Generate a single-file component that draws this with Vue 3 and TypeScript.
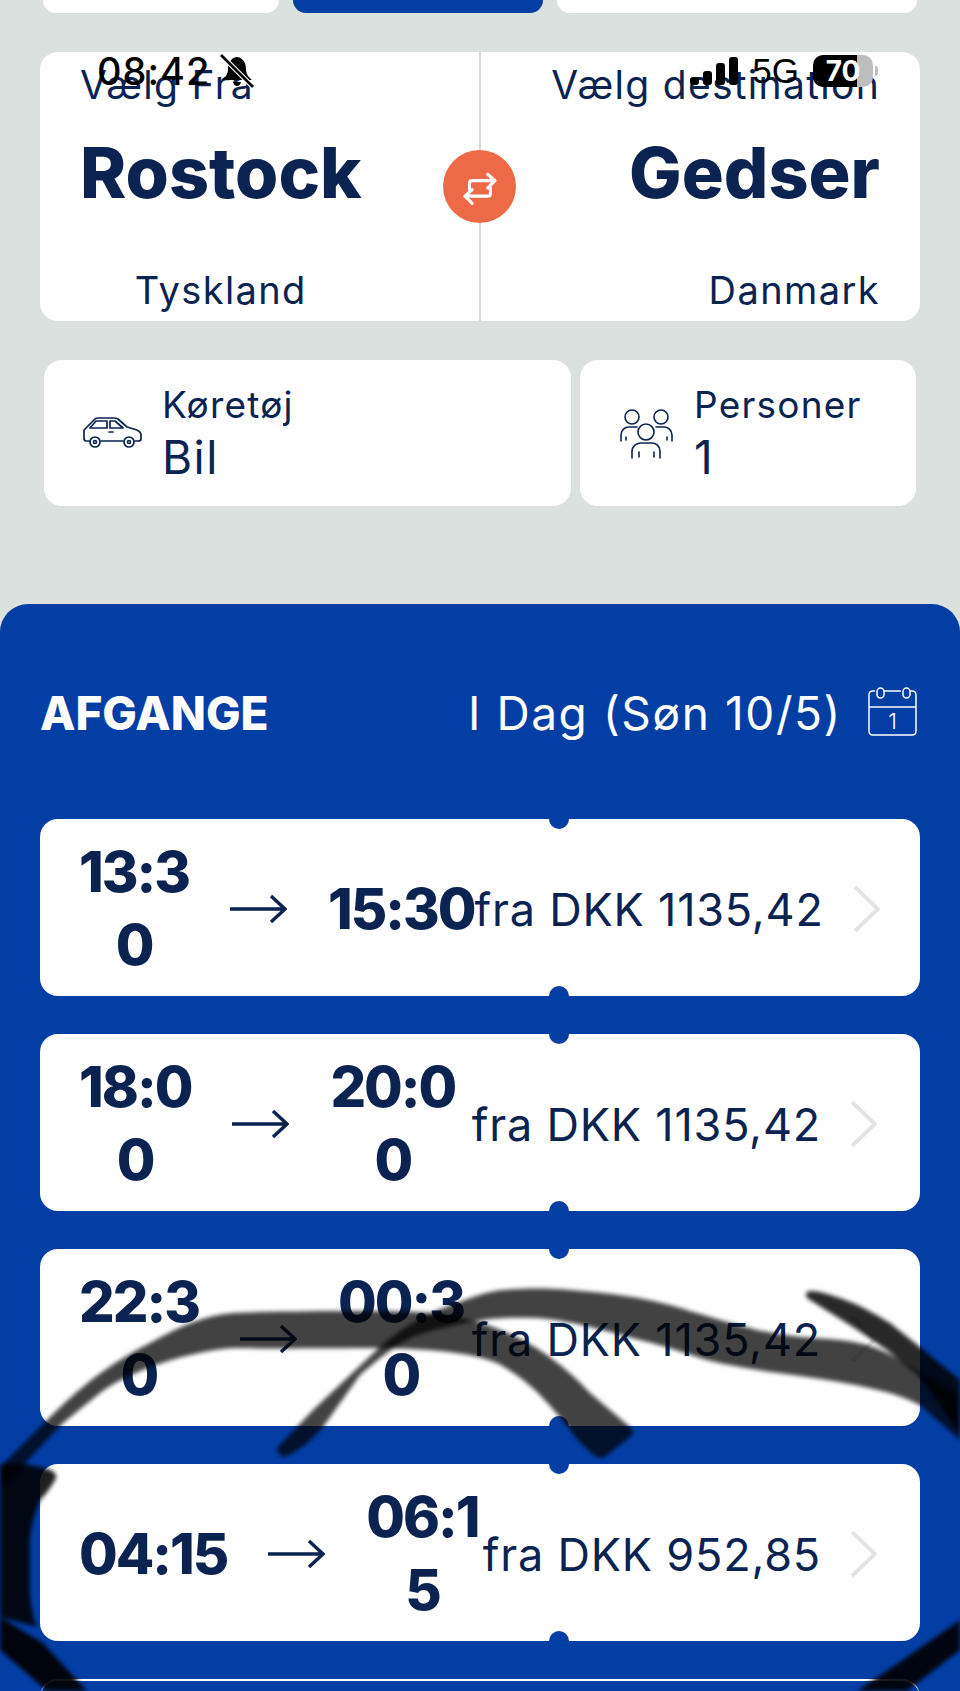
<template>
  <div class="page">
    <div class="tabs">
      <div class="tab tab-a"></div>
      <div class="tab tab-b"></div>
      <div class="tab tab-c"></div>
    </div>

    <div class="route">
      <div class="side side-from">
        <div class="label">Vælg Fra</div>
        <div class="place">
          <div class="name">Rostock</div>
          <div class="country">Tyskland</div>
        </div>
      </div>
      <div class="side side-to">
        <div class="label">Vælg destination</div>
        <div class="place">
          <div class="name">Gedser</div>
          <div class="country">Danmark</div>
        </div>
      </div>
      <div class="swap">
        <svg width="80" height="80" viewBox="0 0 80 80" fill="none" stroke="#fff" stroke-width="3.4" stroke-linecap="round" stroke-linejoin="round">
          <path d="M29 43V36Q29 33 32 33H56M49 26L57 33L49 41" />
          <path d="M52 41V47Q52 50 49 50H24M32 43L24 50L32 58" />
        </svg>
      </div>
    </div>

    <div class="extras">
      <div class="extra extra-car">
        <svg class="car" width="90" height="60" viewBox="0 0 90 60" fill="none" stroke="#0a2351" stroke-width="1.7" stroke-linejoin="round" stroke-linecap="round">
          <path d="M19 41H16Q14 41 14 38V30L25 19Q26 18 28 18H44Q46 18 48 19L57 27L67 30Q71 32 71 35V39Q71 41 68 41H65M53 41H31" />
          <path d="M20 28L26 21H37V28ZM40 21H45L53 28H40Z" />
          <path d="M39 32H43" />
          <circle cx="25" cy="42" r="5" />
          <circle cx="59" cy="42" r="5" />
          <circle cx="25" cy="42" r="1.5" />
          <circle cx="59" cy="42" r="1.5" />
        </svg>
        <div>
          <div class="extra-label">Køretøj</div>
          <div class="extra-value">Bil</div>
        </div>
      </div>
      <div class="extra extra-people">
        <svg class="people" width="85" height="65" viewBox="0 0 85 65" fill="none" stroke="#0a2351" stroke-width="1.6" stroke-linecap="round">
          <circle cx="27" cy="16" r="7" />
          <circle cx="56" cy="16" r="7" />
          <circle cx="41" cy="31" r="8" />
          <path d="M27 57V50C27 45 32 42 36 42H47C51 42 55 45 55 50V57M34 51V56M49 51V56" />
          <path d="M16 40V34C16 29 20 26 24 26H32M67 40V34C67 29 63 26 59 26H51M21 36V39M62 36V39" />
        </svg>
        <div>
          <div class="extra-label">Personer</div>
          <div class="extra-value">1</div>
        </div>
      </div>
    </div>

    <div class="panel">
      <div class="panel-head">
        <div class="panel-title">AFGANGE</div>
        <div class="panel-date">I Dag (Søn 10/5)</div>
        <svg class="calendar" width="49" height="50" viewBox="0 0 49 50" fill="none" stroke="#fff" stroke-width="1.5">
          <path d="M7 4H5Q1 4 1 8V44Q1 48 5 48H44Q48 48 48 44V8Q48 4 44 4H42M16 4H33M1 20H48" />
          <rect x="9" y="1" width="7" height="10" rx="3.5" />
          <rect x="35" y="1" width="7" height="10" rx="3.5" />
          <text x="24.5" y="42" text-anchor="middle" class="cal-day">1</text>
        </svg>
      </div>

      <div class="list">
        <div v-for="dep in departures" :key="dep.price + dep.from[0]" class="dep">
          <div class="time">
            <div v-for="line in dep.from" :key="line">{{ line }}</div>
          </div>
          <svg class="arrow" width="57" height="30" viewBox="0 0 57 30" fill="none" stroke="#0a2351" stroke-width="3.4">
            <path d="M0 15H55M41 2L55 15L41 28" />
          </svg>
          <div class="time">
            <div v-for="line in dep.to" :key="line">{{ line }}</div>
          </div>
          <div class="price">fra DKK {{ dep.price }}</div>
          <svg class="chev" width="27" height="46" viewBox="0 0 27 46" fill="none" stroke="#e3e3e3" stroke-width="4">
            <path d="M2 1L25 23L2 45" />
          </svg>
        </div>
        <div class="dep-next"></div>
      </div>
    </div>

    <!-- status bar laid over the app -->
    <div class="status">
      <div class="clock">08:42</div>
      <svg class="bell" width="34" height="34" viewBox="0 0 34 34">
        <path d="M17 3C10 4 8 10 8 15C8 21 5 23 2 26H32C29 23 26 21 26 15C26 10 24 4 17 3ZM13 28H21Q20 32 17 32Q14 32 13 28Z" fill="#000" />
        <path d="M1 1L33 33" stroke="#fff" stroke-width="5" />
        <path d="M1 1L33 33" stroke="#000" stroke-width="2.6" />
      </svg>
      <div class="status-gap"></div>
      <div class="bars">
        <i class="b1"></i><i class="b2"></i><i class="b3"></i><i class="b4"></i>
      </div>
      <div class="net">5G</div>
      <div class="battery"><span>70</span></div>
      <div class="nub"></div>
    </div>

    <!-- marker scribble drawn over the screenshot -->
    <svg class="scribble" width="960" height="1691" viewBox="0 0 960 1691">
      <defs>
        <filter id="soft" x="-5%" y="-5%" width="110%" height="110%">
          <feGaussianBlur stdDeviation="2.2" />
        </filter>
      </defs>
      <g filter="url(#soft)">
        <path fill-opacity="0.74" d="M0 1467L50 1417C80 1388 105 1366 150 1343C180 1326 205 1315 233 1313C280 1311 400 1310 430 1313C500 1320 550 1350 590 1393L630 1427C634 1431 634 1434 630 1437L606 1456C602 1459 598 1458 594 1455C585 1448 575 1438 568 1427C550 1405 530 1380 497 1363C470 1352 430 1349 380 1348C330 1348 270 1349 233 1348C205 1350 175 1358 150 1367C125 1377 110 1385 100 1393L63 1423L0 1490Z" />
        <path fill-opacity="0.74" d="M278 1447L313 1410L380 1347C405 1325 430 1312 457 1303C475 1296 490 1291 503 1290C525 1288 550 1288 570 1290C610 1293 640 1297 670 1305C700 1314 730 1323 757 1330C790 1337 815 1338 840 1340C855 1342 865 1344 873 1347C890 1353 905 1363 920 1373L960 1395V1440L920 1405C910 1400 900 1396 890 1393C860 1385 835 1381 807 1377C770 1372 740 1368 707 1360C685 1353 665 1346 640 1340C610 1332 570 1320 537 1318C510 1317 490 1318 470 1322C450 1326 430 1330 413 1337C395 1345 375 1362 360 1375L323 1427C312 1440 300 1450 287 1456C280 1458 276 1452 278 1447Z" />
        <path fill-opacity="0.84" d="M807 1292C812 1289 825 1293 840 1298C860 1305 875 1314 890 1323L920 1347L960 1380V1433L920 1377L887 1350L853 1327L810 1300C806 1298 805 1294 807 1292Z" />
        <path fill-opacity="0.88" d="M0 1464H23C30 1465 38 1466 44 1468C52 1470 57 1473 56 1478C52 1486 46 1494 40 1500C34 1515 30 1530 30 1543V1593C31 1605 33 1618 37 1627L0 1617Z" />
        <path fill-opacity="0.92" d="M0 1617L43 1643L87 1691H47L0 1650Z" />
        <path fill-opacity="0.9" d="M960 1620L907 1657L857 1691H907L960 1650Z" />
      </g>
    </svg>
  </div>
</template>

<script setup lang="ts">
interface Departure {
  from: string[];
  to: string[];
  price: string;
}

// the app wraps these mid-word, so the broken lines are kept as they show
const departures: Departure[] = [
  { from: ["13:3", "0"], to: ["15:30"], price: "1135,42" },
  { from: ["18:0", "0"], to: ["20:0", "0"], price: "1135,42" },
  { from: ["22:3", "0"], to: ["00:3", "0"], price: "1135,42" },
  { from: ["04:15"], to: ["06:1", "5"], price: "952,85" },
];
</script>

<style>
html,
body {
  margin: 0;
  background: #033ea5;
}
</style>

<style scoped>
.page {
  position: relative;
  width: 960px;
  height: 1691px;
  overflow: hidden;
  background: #dbe1df;
  color: #0a2351;
  font-family: Inter, "Liberation Sans", sans-serif;
}

.tabs {
  display: flex;
  gap: 14px;
  padding-left: 43px;
}
.tab {
  height: 13px;
  background: #fff;
  border-radius: 0 0 16px 16px;
}
.tab-a {
  width: 236px;
}
.tab-b {
  width: 250px;
  background: #033ea5;
}
.tab-c {
  width: 360px;
}

.route {
  position: relative;
  display: grid;
  grid-template-columns: 1fr 1fr;
  height: 269px;
  margin: 39px 40px 0;
  background: #fff;
  border-radius: 18px;
  overflow: hidden;
}
.side {
  display: flex;
  flex-direction: column;
  padding: 10px 40px 0;
}
.side-from {
  align-items: flex-start;
  border-right: 1px solid #dcdcdc;
}
.side-to {
  align-items: flex-end;
  text-align: right;
  border-left: 1px solid #dcdcdc;
}
.label {
  font-size: 39px;
  line-height: 46px;
  letter-spacing: 1.3px;
}
.place {
  margin-top: 23px;
  text-align: center;
}
.side-to .place {
  text-align: right;
}
.name {
  font-size: 70px;
  line-height: 84px;
  font-weight: 800;
}
.country {
  margin-top: 52px;
  font-size: 38px;
  line-height: 46px;
  letter-spacing: 1.4px;
}
.swap {
  position: absolute;
  left: 403px;
  top: 98px;
  width: 73px;
  height: 73px;
  border-radius: 50%;
  background: #ee6a47;
  display: flex;
  align-items: center;
  justify-content: center;
}

.extras {
  display: flex;
  gap: 9px;
  margin: 39px 44px 0;
}
.extra {
  display: flex;
  align-items: center;
  height: 146px;
  background: #fff;
  border-radius: 18px;
}
.extra-car {
  width: 527px;
  padding-left: 26px;
  box-sizing: border-box;
}
.extra-people {
  width: 336px;
  padding-left: 25px;
  box-sizing: border-box;
}
.car {
  margin: 0 2px 6px 0;
}
.people {
  margin: 0 4px 0 0;
}
.extra-label {
  font-size: 37px;
  line-height: 46px;
  letter-spacing: 1.2px;
}
.extra-value {
  margin-top: 1px;
  font-size: 46px;
  line-height: 56px;
  letter-spacing: 1.5px;
}

.panel {
  height: 1087px;
  margin-top: 98px;
  padding: 0 40px;
  background: #033ea5;
  border-radius: 28px 28px 0 0;
}
.panel-head {
  display: flex;
  align-items: center;
  height: 215px;
  padding-top: 3px;
  box-sizing: border-box;
  color: #fff;
}
.panel-title {
  font-size: 46px;
  font-weight: 800;
}
.panel-date {
  margin-left: auto;
  font-size: 46px;
  letter-spacing: 1.6px;
}
.calendar {
  margin: -3px 3px 0 26px;
}
.cal-day {
  font-family: Inter, sans-serif;
  font-size: 22px;
  font-weight: 300;
  fill: #fff;
  stroke: none;
}

.list {
  display: flex;
  flex-direction: column;
  gap: 38px;
}
.dep {
  position: relative;
  display: flex;
  align-items: center;
  height: 177px;
  padding: 3px 43px 0 39px;
  box-sizing: border-box;
  background: #fff;
  border-radius: 18px;
}
.dep::before,
.dep::after {
  content: "";
  position: absolute;
  left: 509px;
  width: 20px;
  height: 20px;
  border-radius: 50%;
  background: #033ea5;
}
.dep::before {
  top: -10px;
}
.dep::after {
  bottom: -10px;
}
.time {
  font-size: 56px;
  line-height: 73px;
  font-weight: 800;
  letter-spacing: -2px;
  text-align: center;
}
.arrow {
  flex: none;
  margin: 0 41px;
}
.price {
  margin-left: auto;
  font-size: 45px;
  letter-spacing: 0.8px;
  white-space: nowrap;
}
.chev {
  flex: none;
  margin-left: 29px;
}
.dep-next {
  height: 60px;
  border-top: 2px solid #fff;
  border-radius: 18px;
}

.status {
  position: absolute;
  left: 97px;
  top: 50px;
  width: 781px;
  display: flex;
  align-items: center;
  height: 42px;
  color: #000;
}
.clock {
  font-size: 38px;
  font-weight: 500;
  letter-spacing: 1px;
}
.bell {
  margin-left: 10px;
}
.status-gap {
  flex: 1;
}
.bars {
  display: flex;
  align-items: flex-end;
  gap: 4px;
  height: 28px;
}
.bars i {
  width: 9px;
  border-radius: 3px;
  background: #000;
}
.b1 {
  height: 8px;
}
.b2 {
  height: 14px;
}
.b3 {
  height: 22px;
}
.b4 {
  height: 28px;
}
.net {
  margin: 0 14px;
  font-size: 35px;
  font-family: "Liberation Sans", sans-serif;
}
.battery {
  width: 60px;
  height: 32px;
  border-radius: 10px;
  background: linear-gradient(90deg, #000 73%, #bdbdbd 73%);
  color: #fff;
  font-size: 28px;
  font-weight: 700;
  line-height: 32px;
  text-align: center;
}
.nub {
  width: 3px;
  height: 10px;
  margin-left: 2px;
  border-radius: 0 3px 3px 0;
  background: #bdbdbd;
}

.scribble {
  position: absolute;
  left: 0;
  top: 0;
  pointer-events: none;
}
</style>
